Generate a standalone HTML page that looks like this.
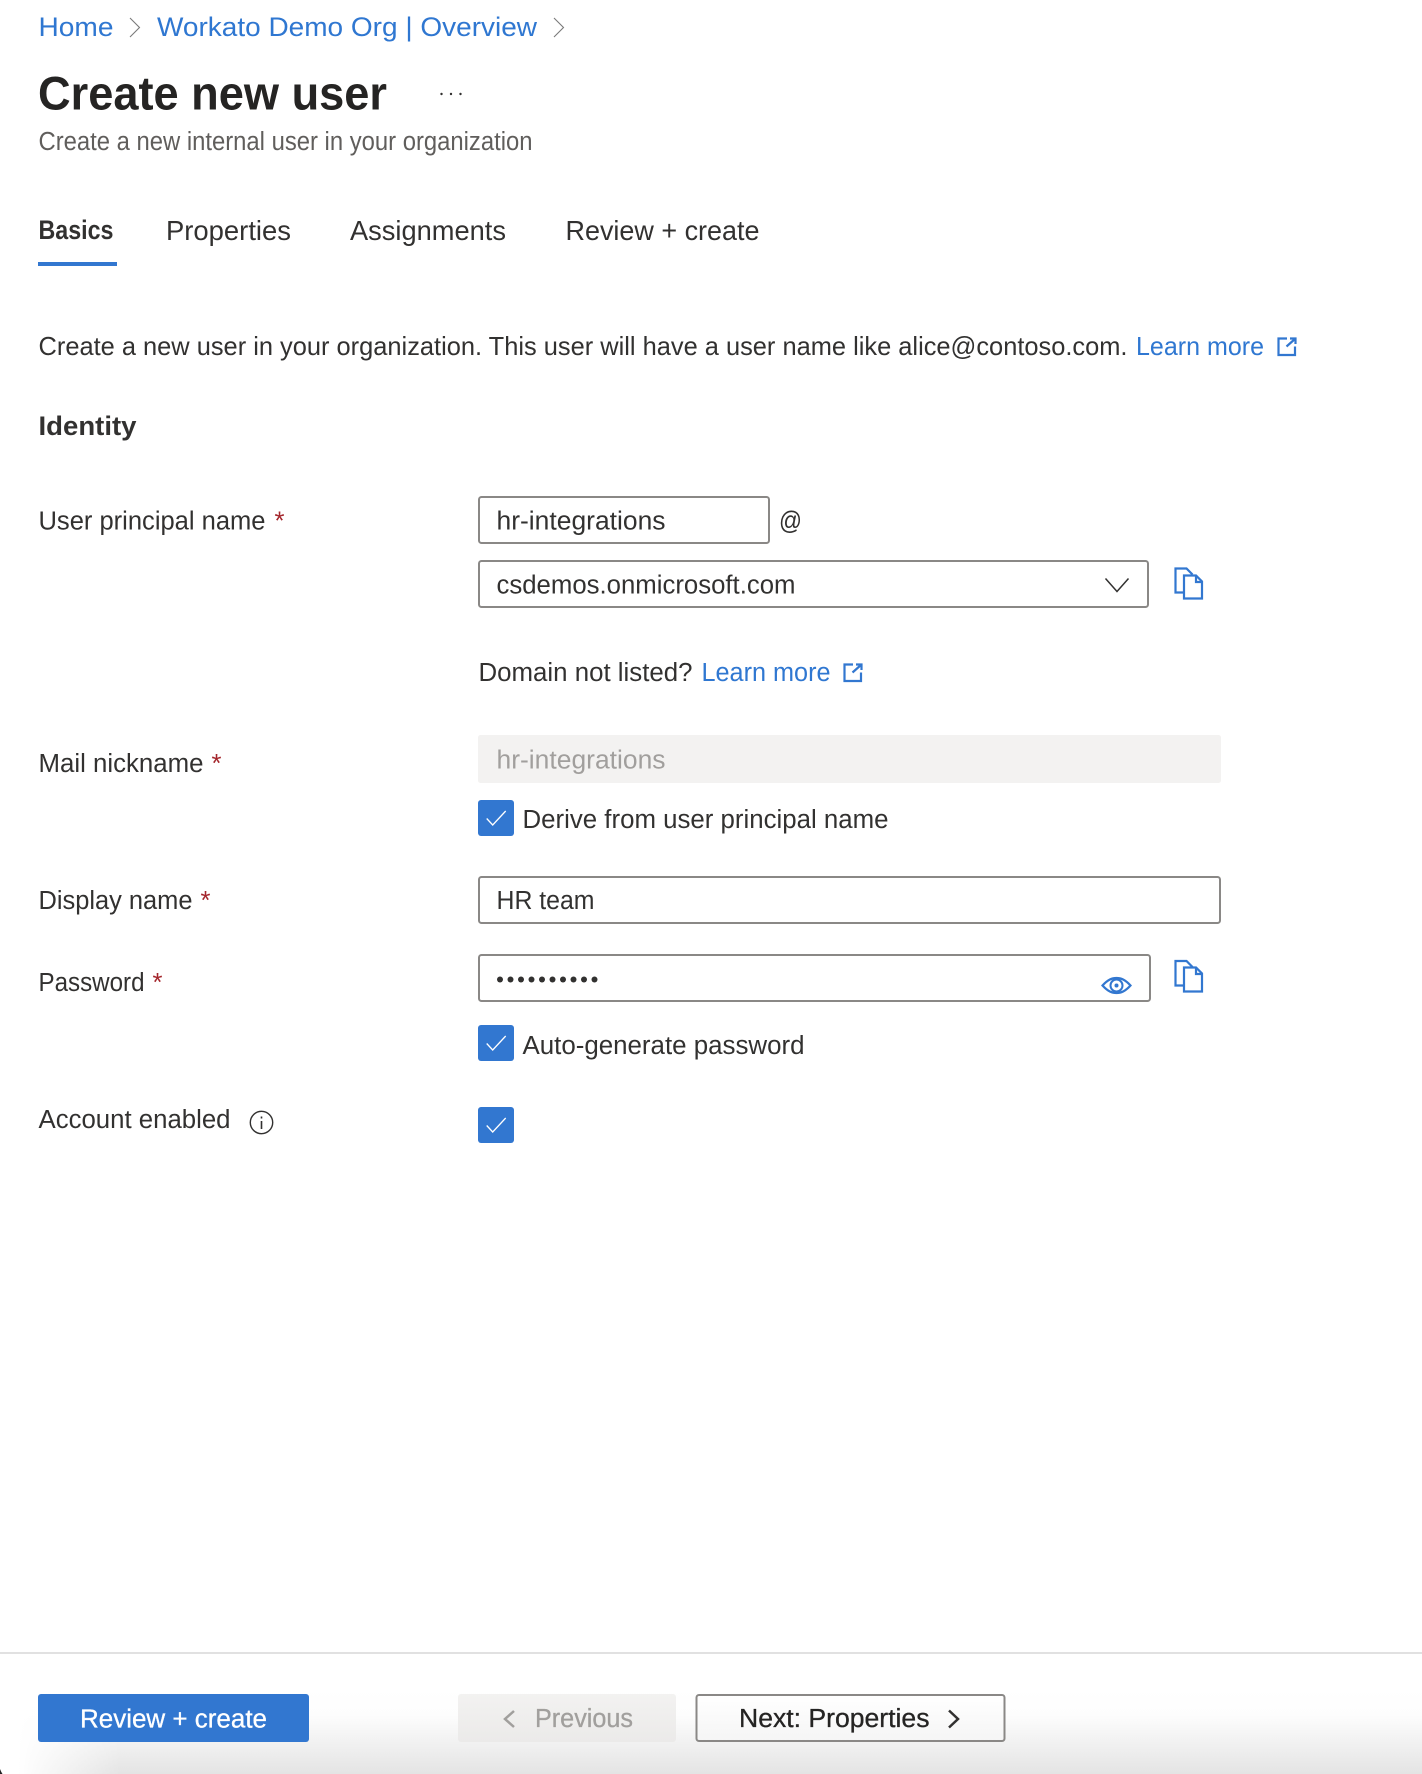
<!DOCTYPE html>
<html lang="en">
<head>
<meta charset="utf-8">
<title>Create new user</title>
<style>
html,body{margin:0;padding:0;background:#fff;width:1422px;height:1774px;overflow:hidden}
svg{display:block}
text{font-family:"Liberation Sans",sans-serif;font-size:25.5px;fill:#323130}
.l{fill:#2f77d1}
.s{fill:#a4262c}
.b{font-weight:700}
.ic{fill:none;stroke:#3277d0;stroke-width:2.2}
</style>
</head>
<body>
<svg width="1422" height="1774" viewBox="0 0 1422 1774" xmlns="http://www.w3.org/2000/svg">
<defs>
<linearGradient id="g" x1="0" y1="0" x2="0" y2="1"><stop offset="0" stop-color="#fff"/><stop offset=".3" stop-color="#fdfdfd"/><stop offset="1" stop-color="#e4e4e4"/></linearGradient>
<linearGradient id="f" x1="0" y1="0" x2="1" y2="0"><stop offset="0" stop-color="#fff"/><stop offset=".15" stop-color="#fff"/><stop offset="1" stop-color="#fff" stop-opacity="0"/></linearGradient>
<linearGradient id="p" x1="0" y1="0" x2="0" y2="1"><stop offset="0" stop-color="#f3f2f1"/><stop offset="1" stop-color="#ebeae9"/></linearGradient>
<linearGradient id="n" x1="0" y1="0" x2="0" y2="1"><stop offset="0" stop-color="#fff"/><stop offset="1" stop-color="#f5f5f5"/></linearGradient>
</defs>
<rect width="1422" height="1774" fill="#fff"/>

<!-- breadcrumb -->
<text class="l" x="38.5" y="36" style="font-size:27px" textLength="75" lengthAdjust="spacingAndGlyphs">Home</text>
<path d="M130 18l9.500 9.500L130 37" fill="none" stroke="#7a7a7a" stroke-width="1.100"/>
<text class="l" x="157" y="36" style="font-size:27px" textLength="380" lengthAdjust="spacingAndGlyphs">Workato Demo Org | Overview</text>
<path d="M554 18l9.500 9.500L554 37" fill="none" stroke="#7a7a7a" stroke-width="1.100"/>

<!-- title -->
<text class="b" x="38" y="109.500" style="font-size:47px;fill:#252423" textLength="349" lengthAdjust="spacingAndGlyphs">Create new user</text>
<circle cx="441.500" cy="94" r="1.200" fill="#323130"/><circle cx="451" cy="94" r="1.200" fill="#323130"/><circle cx="460.500" cy="94" r="1.200" fill="#323130"/>
<text x="38.500" y="150" style="font-size:25.5px;fill:#605e5c" textLength="494" lengthAdjust="spacingAndGlyphs">Create a new internal user in your organization</text>

<!-- tabs -->
<text class="b" x="38.500" y="239" style="font-size:27px" textLength="75" lengthAdjust="spacingAndGlyphs">Basics</text>
<text x="166" y="240" style="font-size:27.5px" textLength="125" lengthAdjust="spacingAndGlyphs">Properties</text>
<text x="350" y="240" style="font-size:27.5px" textLength="156" lengthAdjust="spacingAndGlyphs">Assignments</text>
<text x="565.500" y="240" style="font-size:27.5px" textLength="194" lengthAdjust="spacingAndGlyphs">Review + create</text>
<rect x="38" y="262" width="79" height="4" fill="#3277d0"/>

<!-- intro -->
<text x="38.500" y="355" style="font-size:26px" textLength="1089" lengthAdjust="spacingAndGlyphs">Create a new user in your organization. This user will have a user name like alice@contoso.com.</text>
<text class="l" x="1136" y="355" style="font-size:26px" textLength="128" lengthAdjust="spacingAndGlyphs">Learn more</text>
<path class="ic" d="M1287 338.500h-8.500v16.500h16.500v-8.500M1290 338.500h5.500v5.500M1295.500 338.500l-9 8"/>

<text class="b" x="38.500" y="435" style="font-size:27px" textLength="98" lengthAdjust="spacingAndGlyphs">Identity</text>

<!-- labels -->
<text x="38.500" y="529.500" textLength="227" lengthAdjust="spacingAndGlyphs">User principal name</text>
<text class="s" x="274.500" y="529.500" textLength="10" lengthAdjust="spacingAndGlyphs">*</text>
<text x="38.500" y="772" textLength="165" lengthAdjust="spacingAndGlyphs">Mail nickname</text>
<text class="s" x="211.500" y="772" textLength="10" lengthAdjust="spacingAndGlyphs">*</text>
<text x="38.500" y="909" textLength="154" lengthAdjust="spacingAndGlyphs">Display name</text>
<text class="s" x="200.500" y="909" textLength="10" lengthAdjust="spacingAndGlyphs">*</text>
<text x="38.500" y="991" textLength="106" lengthAdjust="spacingAndGlyphs">Password</text>
<text class="s" x="152.500" y="991" textLength="10" lengthAdjust="spacingAndGlyphs">*</text>
<text x="38.500" y="1128" textLength="192" lengthAdjust="spacingAndGlyphs">Account enabled</text>
<circle cx="261.500" cy="1122.500" r="11.200" fill="none" stroke="#323130" stroke-width="1.400"/>
<rect x="260.700" y="1121" width="1.600" height="8" fill="#323130"/><rect x="260.700" y="1116.500" width="1.600" height="2" fill="#323130"/>

<!-- UPN -->
<rect x="479" y="497" width="290" height="46" rx="2.500" fill="#fff" stroke="#8a8886" stroke-width="2"/>
<text x="496.500" y="529.500" textLength="169" lengthAdjust="spacingAndGlyphs">hr-integrations</text>
<text x="779" y="529.500" textLength="23" lengthAdjust="spacingAndGlyphs">@</text>
<rect x="479" y="561" width="669" height="46" rx="2.500" fill="#fff" stroke="#8a8886" stroke-width="2"/>
<text x="496.500" y="593.500" textLength="299" lengthAdjust="spacingAndGlyphs">csdemos.onmicrosoft.com</text>
<path d="M1105.500 578.500l11.500 13 11.500-13" fill="none" stroke="#323130" stroke-width="1.500"/>
<path class="ic" d="M1183 592.500h-7.500v-24h11l6 6"/>
<path class="ic" d="M1184 575.500h12l6 6v17H1184zM1196 576v6h6" style="fill:#fff"/>

<text x="478.500" y="681" textLength="214" lengthAdjust="spacingAndGlyphs">Domain not listed?</text>
<text class="l" x="701.500" y="681" textLength="129" lengthAdjust="spacingAndGlyphs">Learn more</text>
<path class="ic" d="M853 664.500h-8.500v16.500H861v-8.500M856 664.500h5.500v5.500M861.500 664.500l-9 8"/>

<!-- Mail nickname -->
<rect x="478" y="735" width="743" height="48" rx="2.500" fill="#f3f2f1"/>
<text x="496.500" y="768.500" style="fill:#a19f9d" textLength="169" lengthAdjust="spacingAndGlyphs">hr-integrations</text>
<rect x="478" y="800" width="36" height="36" rx="3" fill="#3277d0"/>
<path d="M486.700 818.500l6 6.500L505.700 811" fill="none" stroke="#fff" stroke-width="1.300"/>
<text x="522.500" y="828" textLength="366" lengthAdjust="spacingAndGlyphs">Derive from user principal name</text>

<!-- Display name -->
<rect x="479" y="877" width="741" height="46" rx="2.500" fill="#fff" stroke="#8a8886" stroke-width="2"/>
<text x="496.500" y="909" textLength="98" lengthAdjust="spacingAndGlyphs">HR team</text>

<!-- Password -->
<rect x="479" y="955" width="671" height="46" rx="2.500" fill="#fff" stroke="#8a8886" stroke-width="2"/>
<g fill="#323130"><circle cx="500" cy="979.500" r="3"/><circle cx="510.500" cy="979.500" r="3"/><circle cx="521" cy="979.500" r="3"/><circle cx="531.500" cy="979.500" r="3"/><circle cx="542" cy="979.500" r="3"/><circle cx="552.500" cy="979.500" r="3"/><circle cx="563" cy="979.500" r="3"/><circle cx="573.500" cy="979.500" r="3"/><circle cx="584" cy="979.500" r="3"/><circle cx="594.500" cy="979.500" r="3"/></g>
<path class="ic" d="M1102.500 985.500C1108 979.500 1112 978 1116.500 978s8.500 1.500 14 7.500c-5.500 6-9.500 7.500-14 7.500s-8.500-1.500-14-7.500z"/>
<circle cx="1116.500" cy="985.500" r="6" fill="none" stroke="#3277d0" stroke-width="2"/>
<circle cx="1116.500" cy="985.500" r="2" fill="#3277d0"/>
<path class="ic" d="M1183 985.500h-7.500v-24.500h11l6 6"/>
<path class="ic" d="M1184 967.500h12l6 6v18H1184zM1196 968v6h6" style="fill:#fff"/>
<rect x="478" y="1025" width="36" height="36" rx="3" fill="#3277d0"/>
<path d="M486.700 1043.500l6 6.500L505.700 1036" fill="none" stroke="#fff" stroke-width="1.300"/>
<text x="522.500" y="1054" textLength="282" lengthAdjust="spacingAndGlyphs">Auto-generate password</text>

<!-- Account enabled -->
<rect x="478" y="1107" width="36" height="36" rx="3" fill="#3277d0"/>
<path d="M486.700 1125.500l6 6.500L505.700 1118" fill="none" stroke="#fff" stroke-width="1.300"/>

<!-- footer -->
<rect x="0" y="1652" width="1422" height="2" fill="#e1e1e1"/>
<rect x="0" y="1690" width="1422" height="84" fill="url(#g)"/>
<rect x="0" y="1690" width="120" height="84" fill="url(#f)"/>
<path d="M0 1769C.8 1771 1.600 1772.500 2.500 1774H0z" fill="#222"/>
<rect x="38" y="1694" width="271" height="48" rx="3" fill="#3277d0"/>
<text x="80" y="1727.500" style="fill:#fff;stroke:#fff;stroke-width:.3px" textLength="187" lengthAdjust="spacingAndGlyphs">Review + create</text>
<rect x="458" y="1694" width="218" height="48" rx="3" fill="url(#p)"/>
<path d="M514 1711l-9 8 9 8" fill="none" stroke="#a19f9d" stroke-width="2.500"/>
<text x="535" y="1727" style="fill:#a19f9d;stroke:#a19f9d;stroke-width:.3px" textLength="98" lengthAdjust="spacingAndGlyphs">Previous</text>
<rect x="696.500" y="1695" width="308" height="46" rx="2.500" fill="url(#n)" stroke="#8a8886" stroke-width="2"/>
<text x="739" y="1727" style="fill:#252423;stroke:#252423;stroke-width:.3px" textLength="190.500" lengthAdjust="spacingAndGlyphs">Next: Properties</text>
<path d="M949 1710.500l9 8.500-9 8.500" fill="none" stroke="#323130" stroke-width="2.500"/>
</svg>
</body>
</html>
